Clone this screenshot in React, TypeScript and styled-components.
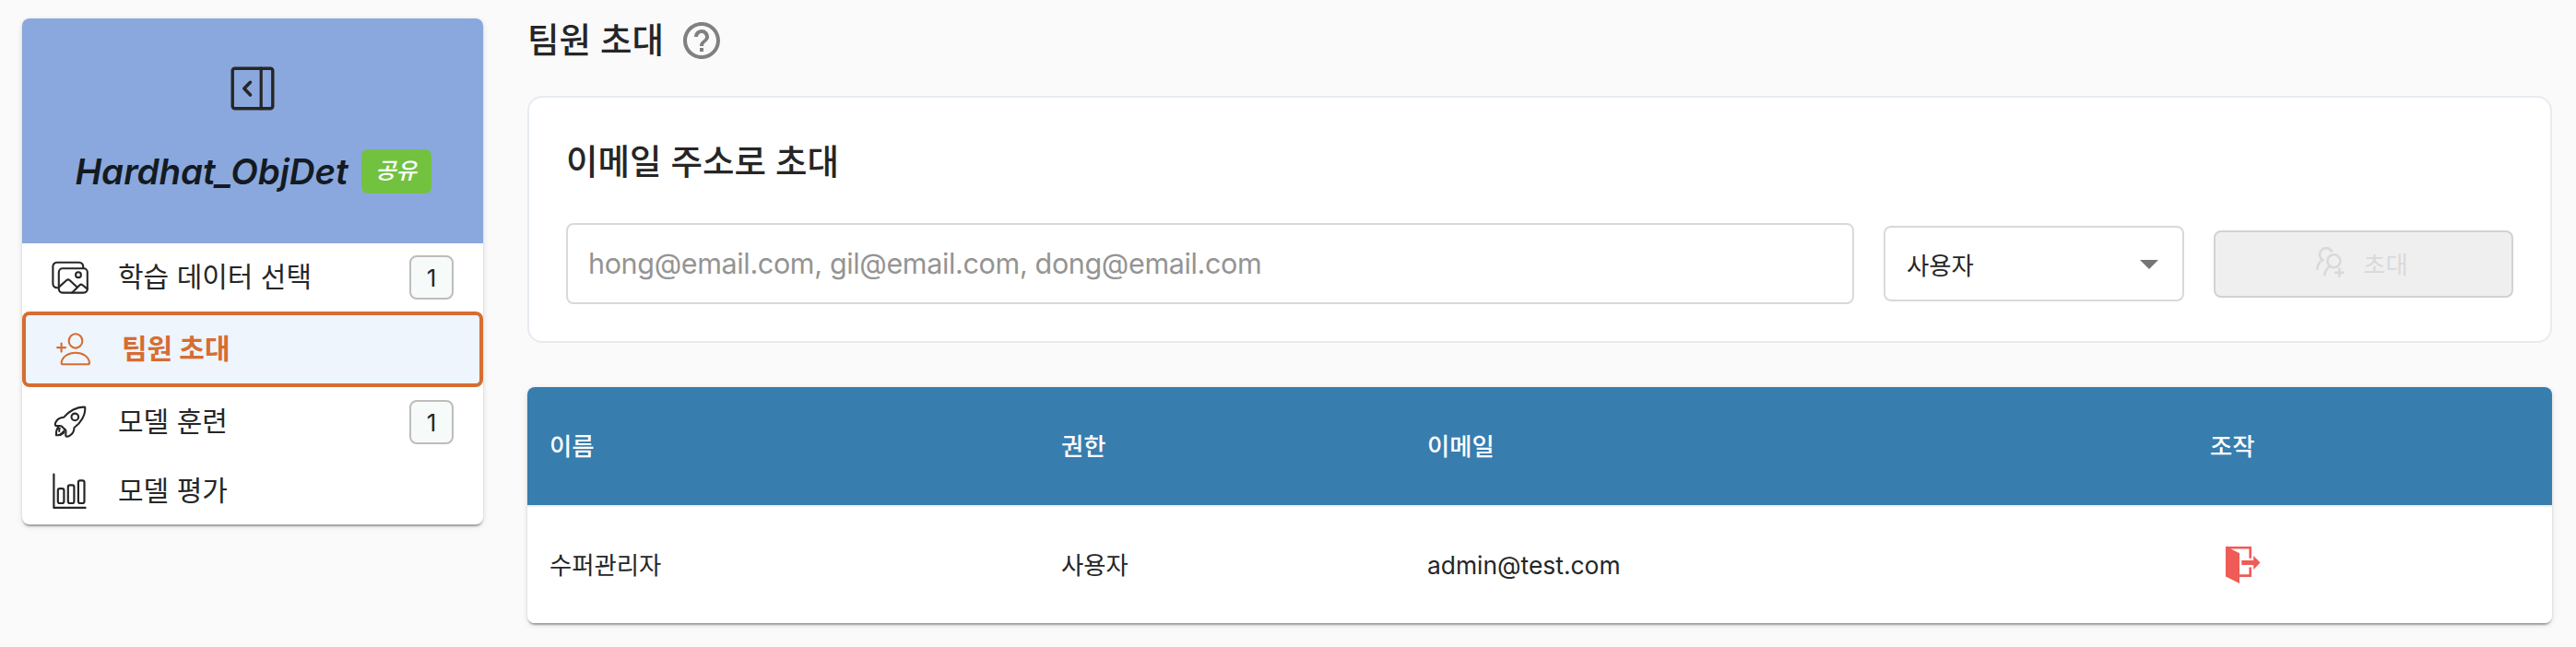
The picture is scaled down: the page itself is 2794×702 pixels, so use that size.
import React from 'react';
import styled, { createGlobalStyle } from 'styled-components';

const GlobalStyle = createGlobalStyle`
  * { box-sizing: border-box; }
  body {
    margin: 0;
    background: #fafafa;
    color: #262626;
    font-family: Inter, 'Noto Sans CJK KR', sans-serif;
  }
  svg { display: block; flex: none; }
`;

const cardShadow =
  '0 4px 2px -2px rgba(0,0,0,.2), 0 2px 2px rgba(0,0,0,.14), 0 2px 6px rgba(0,0,0,.12)';

const Page = styled.div`
  display: flex;
  align-items: flex-start;
  gap: 48px;
  height: 702px;
  padding: 20px 26px 0 24px;
`;

const Sidebar = styled.aside`
  width: 500px;
  height: 549px;
  flex: none;
  border-radius: 8px;
  background: #fff;
  box-shadow: ${cardShadow};
  overflow: hidden;
`;

const ProjectHeader = styled.header`
  height: 244px;
  padding-top: 52px;
  display: flex;
  flex-direction: column;
  align-items: center;
  gap: 42px;
  background: #8aa8dd;
`;

const ProjectTitle = styled.div`
  display: flex;
  align-items: center;
  gap: 14px;
  height: 48px;
  padding-left: 1px;
  font-style: italic;
`;

const ProjectName = styled.span`
  font-size: 38.5px;
  font-weight: 600;
  line-height: 48px;
  letter-spacing: -0.05px;
  color: #141a22;
`;

const ShareTag = styled.span`
  width: 76px;
  height: 48px;
  border-radius: 7px;
  background: #72c240;
  color: #fff;
  font-size: 24.5px;
  font-weight: 500;
  line-height: 47px;
  text-align: center;
`;

const Menu = styled.nav`
  display: flex;
  flex-direction: column;
`;

const MenuItem = styled.a<{ $height: number; $active?: boolean }>`
  display: flex;
  align-items: center;
  height: ${(p) => p.$height}px;
  padding: 0 ${(p) => (p.$active ? 28 : 32)}px;
  border: ${(p) => (p.$active ? '4px solid #d66d32' : '0')};
  border-radius: ${(p) => (p.$active ? 8 : 0)}px;
  background: ${(p) => (p.$active ? '#eef5fd' : 'transparent')};
  color: ${(p) => (p.$active ? '#d66d32' : '#262626')};
  font-weight: ${(p) => (p.$active ? 700 : 400)};
`;

const MenuIcon = styled.span<{ $active?: boolean }>`
  width: ${(p) => (p.$active ? 76 : 72)}px;
  padding-left: ${(p) => (p.$active ? 4 : 0)}px;
  flex: none;
`;

const MenuLabel = styled.span`
  flex: 1;
  padding-bottom: 2px;
  font-size: 30px;
  line-height: 44px;
`;

const CountBadge = styled.span`
  width: 48px;
  height: 48px;
  border: 2px solid #bdbdbd;
  border-radius: 8px;
  background: #f6faf9;
  font-size: 26px;
  line-height: 45px;
  text-align: center;
`;

const Main = styled.main`
  flex: 1;
  min-width: 0;
`;

const PageHeading = styled.div`
  display: flex;
  align-items: center;
  gap: 17px;
  height: 48px;
`;

const PageTitle = styled.h1`
  margin: 0;
  padding-bottom: 1px;
  font-size: 37.5px;
  font-weight: 500;
  line-height: 48px;
`;

const InviteCard = styled.section`
  height: 268px;
  margin-top: 36px;
  padding: 45px 40px 0;
  border: 2px solid #e7ebf1;
  border-radius: 16px;
  background: #fff;
`;

const CardTitle = styled.h2`
  margin: 0;
  font-size: 37.5px;
  font-weight: 500;
  line-height: 50px;
`;

const InviteForm = styled.div`
  display: flex;
  align-items: center;
  gap: 32px;
  height: 88px;
  margin-top: 41px;
`;

const EmailInput = styled.input`
  flex: 1;
  min-width: 0;
  height: 88px;
  padding: 0 22px 2px;
  border: 2px solid #d9d9d9;
  border-radius: 8px;
  outline: 0;
  background: #fff;
  font-family: inherit;
  font-size: 30.5px;
  letter-spacing: -0.35px;
  &::placeholder { color: #949494; opacity: 1; }
`;

const RoleSelect = styled.div`
  display: flex;
  align-items: center;
  justify-content: space-between;
  width: 326px;
  height: 82px;
  padding: 0 12px 0 23px;
  border: 2px solid #d9d9d9;
  border-radius: 8px;
  font-size: 26.4px;
`;

const InviteButton = styled.button`
  display: flex;
  align-items: center;
  justify-content: center;
  gap: 20px;
  width: 325px;
  height: 73px;
  padding: 0 4px 2px 0;
  border: 2px solid #d2d2d2;
  border-radius: 8px;
  background: #efefef;
  color: #d9d9d9;
  font-family: inherit;
  font-size: 26.4px;
`;

const MemberTable = styled.section`
  height: 256px;
  margin-top: 48px;
  border-radius: 8px;
  background: #fff;
  box-shadow: ${cardShadow};
  overflow: hidden;
`;

const TableRow = styled.div<{ $head?: boolean }>`
  display: grid;
  grid-template-columns: 555px 397px 849px 1fr;
  align-items: center;
  height: ${(p) => (p.$head ? 130 : 126)}px;
  padding-left: 24px;
  border-bottom: ${(p) => (p.$head ? '2px solid #eeeeee' : '0')};
  background: ${(p) => (p.$head ? '#377dae' : '#fff')};
  background-clip: padding-box;
  color: ${(p) => (p.$head ? '#fff' : '#262626')};
  font-size: 26.4px;
  font-weight: ${(p) => (p.$head ? 500 : 400)};
  line-height: 38px;
`;

const LeaveButton = styled.span`
  padding-left: 17px;
`;

const line = {
  fill: 'none',
  stroke: 'currentColor',
  strokeLinecap: 'round' as const,
  strokeLinejoin: 'round' as const,
};

const CollapseIcon = () => (
  <svg width="48" height="48" viewBox="0 0 48 48" {...line} stroke="#262626" strokeWidth="3.4">
    <rect x="2.2" y="2.2" width="43.6" height="43.6" rx="2.5" />
    <path d="M33.2 2.2v43.6" strokeWidth="3.2" />
    <path d="M21.5 17.3 14.8 24l6.7 7" strokeWidth="3.6" />
  </svg>
);

const ImagesIcon = () => (
  <svg width="40" height="36" viewBox="0 0 40 36" {...line} strokeWidth="2.1">
    <path d="M6.5 29.3H5.8a4.4 4.4 0 0 1-4.4-4.4V6A4.3 4.3 0 0 1 5.7 1.7h24.2A4.3 4.3 0 0 1 34.2 6v2" />
    <rect x="7.8" y="8.2" width="31" height="26.4" rx="4" />
    <circle cx="29" cy="15.2" r="2.9" />
    <path d="m8 28.4 8.3-7.4a2.4 2.4 0 0 1 3.2 0l7.8 7.2M22.2 34.6l8.1-8.2a2.4 2.4 0 0 1 3.2-.2l5.3 4.4" />
  </svg>
);

const AddPersonIcon = () => (
  <svg width="38" height="38" viewBox="0 0 38 38" {...line} strokeWidth="2.1">
    <ellipse cx="22" cy="9.9" rx="7.3" ry="7.7" />
    <path d="M8 35.2a1.4 1.4 0 0 1-1.4-1.6C7.300 27.200 14 22.700 22 22.700s14.400 4.500 15 10.900a1.400 1.400 0 0 1-1.400 1.600ZM6.600 12.600v9M2.100 17.100h9" />
  </svg>
);

const RocketIcon = () => (
  <svg width="38" height="38" viewBox="0 0 38 38" {...line} strokeWidth="2.1">
    <path d="M36.200 2.700C27.500 2 18.500 7.200 13.300 13.700c-4.300.2-7 1.800-8.800 5.200-.9 1.600-.9 3.900.1 4.100 2.200.5 4.200-.6 6.200.4l4.300 4.200c1 1.900-.1 4.100.2 6.200.2 1.200 2.400 1 3.900.1 3.500-1.900 5.200-4.600 5.300-8.900C31.500 20.200 37 11.500 36.200 2.700Z" />
    <circle cx="25.300" cy="13.400" r="3.800" />
    <path d="M7 24.700c-1.700 2.200-2.300 5-2 8.500 3.300.3 6-.4 8-2.400l.5-2.600M8.800 25.600c-.6 1.100-.7 2.100-.5 3.300M9.500 32c1.300-.5 2.300-1.300 3-2.500" />
  </svg>
);

const ChartIcon = () => (
  <svg width="38" height="40" viewBox="0 0 38 40" {...line} strokeWidth="2.2">
    <path d="M2.400 1.600v36.300h34.200" />
    <rect x="6.800" y="17.200" width="6.600" height="15.800" rx="2" />
    <rect x="17.800" y="13.300" width="6.600" height="19.700" rx="2" />
    <rect x="28.900" y="8.400" width="6.600" height="24.600" rx="2" />
  </svg>
);

const HelpIcon = () => (
  <svg width="48" height="48" viewBox="0 0 24 24" fill="#808080">
    <path d="M11 18h2v-2h-2v2zm1-16C6.480 2 2 6.480 2 12s4.480 10 10 10 10-4.480 10-10S17.520 2 12 2zm0 18c-4.410 0-8-3.590-8-8s3.590-8 8-8 8 3.590 8 8-3.590 8-8 8zm0-14c-2.210 0-4 1.790-4 4h2c0-1.100.9-2 2-2s2 .9 2 2c0 2-3 1.750-3 5h2c0-2.250 3-2.500 3-5 0-2.210-1.790-4-4-4z" />
  </svg>
);

const DropDownIcon = () => (
  <svg width="48" height="48" viewBox="0 0 24 24" fill="#757575">
    <path d="m7 10 5 5 5-5z" />
  </svg>
);

const InviteIcon = () => (
  <svg width="32" height="34" viewBox="0 0 32 34" {...line} strokeLinecap="butt" strokeWidth="2.6">
    <circle cx="20.400" cy="15.300" r="7" />
    <path d="M18.500 5.600a7 7 0 1 0-8.900 9.200M8 13.500c-3.300 2.600-5.400 6.500-5.800 11.300M15.500 20.800c-3 2.600-4.900 6-5.400 10.600M26.300 22.800V33M21.200 27.900h10.200" />
  </svg>
);

const LeaveIcon = () => (
  <svg width="38" height="41" viewBox="0 0 38 41" fill="#ef5b56">
    <path d="M0 0h28v12.700h-2.600V2.500H5.500L15 7.300v23h10.400v-7.800H28v10.400H15V40L0 32.600Z" />
    <path d="M17.300 15h12.900v-5l7.300 7.500-7.300 7.600v-5H17.300Z" />
  </svg>
);

const menu = [
  { label: '학습 데이터 선택', icon: <ImagesIcon />, height: 74, count: 1 },
  { label: '팀원 초대', icon: <AddPersonIcon />, height: 82, active: true },
  { label: '모델 훈련', icon: <RocketIcon />, height: 76, count: 1 },
  { label: '모델 평가', icon: <ChartIcon />, height: 73 },
];

export default function App() {
  return (
    <>
      <GlobalStyle />
      <Page>
        <Sidebar>
          <ProjectHeader>
            <CollapseIcon />
            <ProjectTitle>
              <ProjectName>Hardhat_ObjDet</ProjectName>
              <ShareTag>공유</ShareTag>
            </ProjectTitle>
          </ProjectHeader>
          <Menu>
            {menu.map((m) => (
              <MenuItem key={m.label} $height={m.height} $active={m.active}>
                <MenuIcon $active={m.active}>{m.icon}</MenuIcon>
                <MenuLabel>{m.label}</MenuLabel>
                {m.count && <CountBadge>{m.count}</CountBadge>}
              </MenuItem>
            ))}
          </Menu>
        </Sidebar>
        <Main>
          <PageHeading>
            <PageTitle>팀원 초대</PageTitle>
            <HelpIcon />
          </PageHeading>
          <InviteCard>
            <CardTitle>이메일 주소로 초대</CardTitle>
            <InviteForm>
              <EmailInput placeholder="hong@email.com, gil@email.com, dong@email.com" />
              <RoleSelect>
                사용자
                <DropDownIcon />
              </RoleSelect>
              <InviteButton disabled>
                <InviteIcon />
                초대
              </InviteButton>
            </InviteForm>
          </InviteCard>
          <MemberTable>
            <TableRow $head>
              <span>이름</span>
              <span>권한</span>
              <span>이메일</span>
              <span>조작</span>
            </TableRow>
            <TableRow>
              <span>수퍼관리자</span>
              <span>사용자</span>
              <span>admin@test.com</span>
              <LeaveButton>
                <LeaveIcon />
              </LeaveButton>
            </TableRow>
          </MemberTable>
        </Main>
      </Page>
    </>
  );
}
